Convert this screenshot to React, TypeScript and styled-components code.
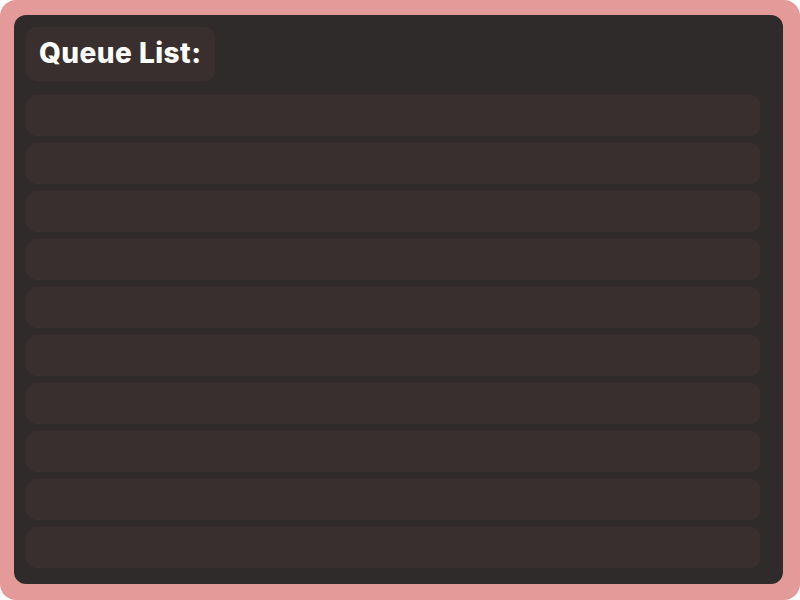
import React from "react";
import styled, { createGlobalStyle } from "styled-components";

const GlobalStyle = createGlobalStyle`
  html, body { margin: 0; padding: 0; background: #ffffff; }
  body { font-family: Inter, "Noto Sans", sans-serif; }
`;

const Frame = styled.div`
  width: 800px;
  height: 600px;
  box-sizing: border-box;
  background: #e59a9a;
  border-radius: 16px;
  padding: 15px 17px 16px 14px;
  display: flex;
`;

const Panel = styled.div`
  flex: 1;
  background: #2f2b2a;
  border-radius: 12px;
  padding: 12px 23px 16px 12px;
  display: flex;
  flex-direction: column;
  align-items: flex-start;
`;

const TitleBox = styled.div`
  background: #392f2e;
  border-radius: 10px;
  height: 54px;
  box-sizing: border-box;
  padding: 0 13px 3px;
  display: flex;
  align-items: center;
  margin-bottom: 14px;
`;

const Title = styled.h1`
  margin: 0;
  font-family: Inter, "Noto Sans", sans-serif;
  font-weight: 800;
  font-size: 28px;
  color: #ffffff;
  letter-spacing: 0.45px;
`;

const List = styled.div`
  align-self: stretch;
  display: flex;
  flex-direction: column;
  gap: 7px;
`;

const Row = styled.div`
  height: 41px;
  background: #392f2e;
  border-radius: 10px;
`;

export default function App() {
  const rows = Array.from({ length: 10 }, (_, i) => i);
  return (
    <>
      <GlobalStyle />
      <Frame>
        <Panel>
          <TitleBox>
            <Title>Queue List:</Title>
          </TitleBox>
          <List>
            {rows.map((i) => (
              <Row key={i} />
            ))}
          </List>
        </Panel>
      </Frame>
    </>
  );
}
